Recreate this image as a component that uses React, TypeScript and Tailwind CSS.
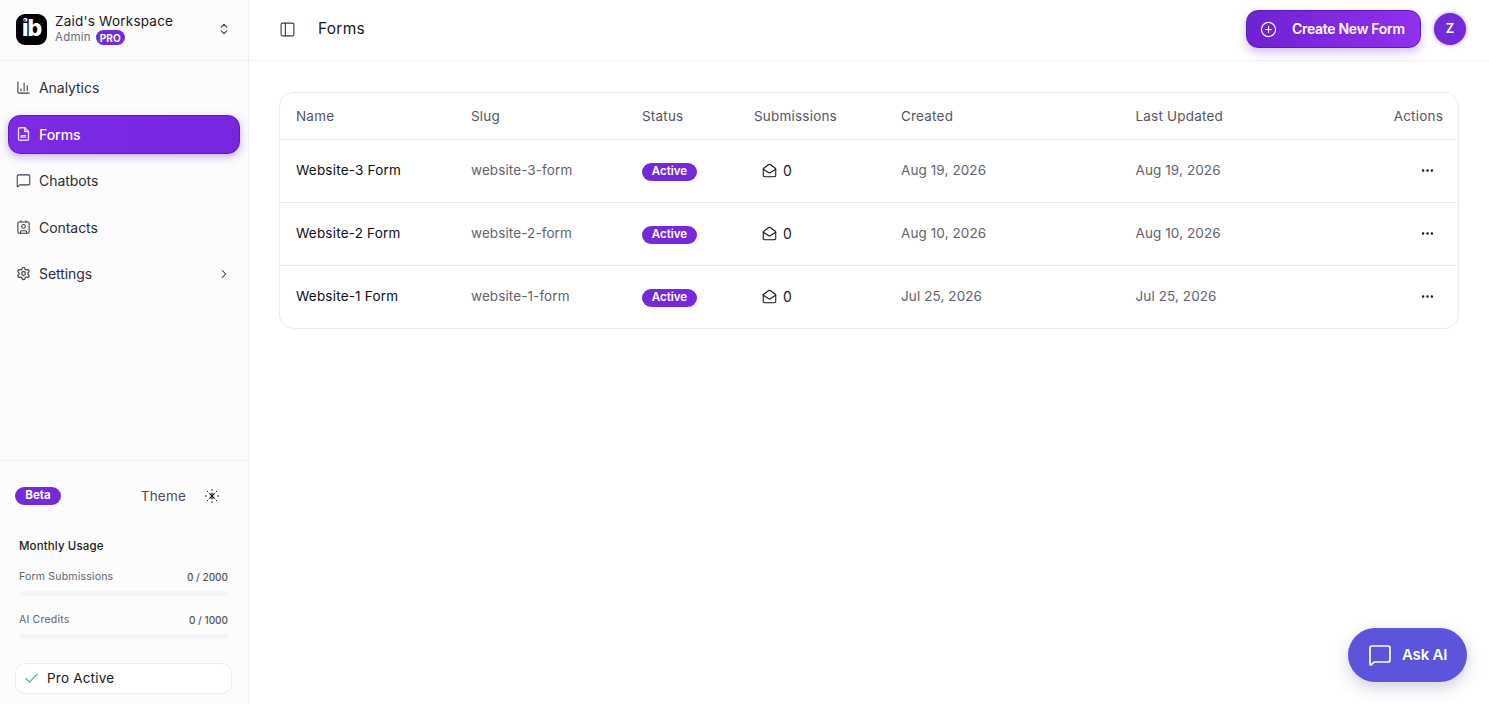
import {
  ChartColumn,
  Check,
  ChevronRight,
  ChevronsUpDown,
  CirclePlus,
  Contact,
  Ellipsis,
  MailOpen,
  MessageSquare,
  PanelLeft,
  Settings,
} from "lucide-react";
import type { ReactNode } from "react";

const rows = [
  { name: "Website-3 Form", slug: "website-3-form", created: "Aug 19, 2026", updated: "Aug 19, 2026" },
  { name: "Website-2 Form", slug: "website-2-form", created: "Aug 10, 2026", updated: "Aug 10, 2026" },
  { name: "Website-1 Form", slug: "website-1-form", created: "Jul 25, 2026", updated: "Jul 25, 2026" },
];

const gridCols = "grid grid-cols-[175px_171px_112px_147px_234.5px_1fr_auto] items-center pl-[16px] pr-[15px]";

function FormIcon() {
  return (
    <svg width="16" height="16" viewBox="0 0 24 24" fill="none" stroke="#ecdcff" strokeWidth="2.2" strokeLinecap="round" strokeLinejoin="round">
      <path d="M6 2h8l6 6v12a2 2 0 0 1-2 2H6a2 2 0 0 1-2-2V4a2 2 0 0 1 2-2z" />
      <path d="M14 2v6h6" />
      <path d="M8.5 17v-2.5h7" />
      <path d="M8.5 17h7" />
    </svg>
  );
}

function ThemeIcon() {
  return (
    <svg width="16" height="16" viewBox="0 0 24 24" fill="none" stroke="#1c1c22" strokeLinecap="round" className="ml-[18px]">
      <g strokeWidth="1.8">
        <path d="M8.5 8.5l7 7" />
        <path d="M15.5 8.5l-7 7" />
        <path d="M12 7.5v9" />
      </g>
      <g strokeWidth="1.5">
        <path d="M12 2v1.5" />
        <path d="M12 20.5V22" />
        <path d="M2 12h1.5" />
        <path d="M20.5 12H22" />
        <path d="M5 5l1 1" />
        <path d="M18 18l1 1" />
        <path d="M19 5l-1 1" />
        <path d="M6 18l-1 1" />
      </g>
    </svg>
  );
}

function NavItem({ icon, label, active, chevron }: { icon: ReactNode; label: string; active?: boolean; chevron?: boolean }) {
  return (
    <div
      className={
        active
          ? "flex h-[38.5px] items-center gap-2 rounded-xl border border-[#5b1bb8] bg-gradient-to-r from-[#7c2ae4] to-[#7626dc] pl-[7px] pr-2 font-medium text-white shadow-[0_3px_8px_rgba(109,40,217,0.35)]"
          : "flex h-[38.5px] items-center gap-2 pl-2 pr-2 text-[#2c2c38]"
      }
    >
      <span className="flex w-[15px] shrink-0 justify-center">{icon}</span>
      <span className="flex-1 text-[14px] tracking-[-0.05px]">{label}</span>
      {chevron && <ChevronRight size={14} strokeWidth={1.75} className="mr-[1px]" />}
    </div>
  );
}

function Usage({ label, value }: { label: string; value: string }) {
  return (
    <div>
      <div className="flex items-center justify-between leading-[16px]">
        <span className="text-[10.5px] tracking-[0.2px] text-[#62626e]">{label}</span>
        <span className="text-[10px] font-medium text-[#55555f]">{value}</span>
      </div>
      <div className="mt-[6px] h-[5px] rounded-full bg-[#f3f4f8]" />
    </div>
  );
}

export default function App() {
  return (
    <div className="relative flex h-[704px] w-full overflow-hidden bg-white font-['Inter',sans-serif] text-[#09090b]">
      <aside className="flex h-full w-[249px] shrink-0 flex-col border-r border-[#f0f0f2] bg-[#fcfcfc]">
        <div className="flex h-[61px] shrink-0 items-center border-b border-[#f2f2f3] pb-[2px] pl-4 pr-[17px]">
          <div className="relative flex h-[31px] w-[31px] shrink-0 items-center justify-center rounded-[9px] bg-black pb-[1px] text-[23px] font-extrabold leading-none tracking-[-1px] text-white">
            ib
            <span className="absolute left-[7px] top-[5px] h-[3px] w-[3px] rounded-full bg-[#5b46d8]" />
          </div>
          <div className="ml-[8px] flex-1">
            <div className="text-[13.5px] leading-[17px] tracking-[0.22px] text-[#17171c]">Zaid's Workspace</div>
            <div className="flex h-[16px] items-center gap-[5px]">
              <span className="text-[11.5px] tracking-[0.2px] text-[#6b6b80]">Admin</span>
              <span className="flex h-[15px] items-center rounded-full bg-[#7629d9] px-[4px] text-[10px] font-bold leading-none tracking-[0.2px] text-white">PRO</span>
            </div>
          </div>
          <ChevronsUpDown size={14} strokeWidth={1.75} className="text-[#24242c]" />
        </div>

        <nav className="flex flex-col gap-2 pl-2 pr-2 pt-[7.5px]">
          <NavItem icon={<ChartColumn size={15} strokeWidth={1.7} className="text-[#3c3c48]" />} label="Analytics" />
          <NavItem active icon={<FormIcon />} label="Forms" />
          <NavItem icon={<MessageSquare size={15} strokeWidth={1.7} className="text-[#3c3c48]" />} label="Chatbots" />
          <NavItem icon={<Contact size={16} strokeWidth={1.7} className="text-[#3c3c48]" />} label="Contacts" />
          <NavItem icon={<Settings size={15} strokeWidth={1.8} className="text-[#3c3c48]" />} label="Settings" chevron />
        </nav>

        <div className="mt-auto border-t border-[#f2f2f3] pb-[10px]">
          <div className="mt-[26px] flex h-[18px] items-center pl-[15px] pr-[28px]">
            <span className="flex h-[18px] w-[46px] items-center justify-center rounded-full bg-[#7629d9] text-[11.5px] font-bold text-white">Beta</span>
            <span className="ml-auto text-[13.5px] tracking-[0.2px] text-[#4d4d5a]">Theme</span>
            <ThemeIcon />
          </div>
          <div className="mt-[33px] pl-[19px] pr-[20px]">
            <div className="text-[11.5px] font-medium leading-[16px] tracking-[0.12px] text-[#1c1c22]">Monthly Usage</div>
            <div className="mt-[15px] flex flex-col gap-[16px]">
              <Usage label="Form Submissions" value="0 / 2000" />
              <Usage label="AI Credits" value="0 / 1000" />
            </div>
          </div>
          <div className="ml-[15px] mr-[16px] mt-[24px] flex h-[31px] items-center rounded-[10px] border border-[#ececef] bg-white pl-[6.5px]">
            <Check size={17} strokeWidth={1.6} className="text-[#45b56f]" />
            <span className="ml-[7.5px] text-[13.5px] tracking-[0.2px] text-[#17171c]">Pro Active</span>
          </div>
        </div>
      </aside>

      <main className="flex min-w-0 flex-1 flex-col">
        <header className="flex h-[61px] shrink-0 items-center border-b border-[#f4f4f5] pb-[2px] pl-[29.5px] pr-[23px]">
          <PanelLeft size={17} strokeWidth={1.6} className="text-[#3a3a44]" />
          <h1 className="ml-[22.5px] text-[15.5px] font-normal tracking-[0.25px] text-[#17171c]">Forms</h1>
          <button className="ml-auto flex h-[38px] w-[175px] items-center rounded-xl border border-[#5b1bb8] bg-gradient-to-r from-[#6f22d2] to-[#9130ee] pl-[13px] text-white shadow-[0_4px_10px_rgba(109,40,217,0.3)]">
            <CirclePlus size={17} strokeWidth={1.6} />
            <span className="mb-px ml-[15px] text-[14px] font-semibold tracking-[-0.3px]">Create New Form</span>
          </button>
          <div className="ml-[13px] flex h-[32px] w-[32px] items-center justify-center rounded-full bg-[#7629d9] text-[13px] font-semibold text-white shadow-[0_0_4px_rgba(124,42,224,0.5)]">Z</div>
        </header>

        <div className="pl-[30px] pr-[30px] pt-[31px]">
          <div className="overflow-hidden rounded-[14px] border border-[#ececee]">
            <div className={`${gridCols} h-[46px] pt-px text-[13.5px] tracking-[0.2px] text-[#55555f]`}>
              <span>Name</span>
              <span>Slug</span>
              <span>Status</span>
              <span>Submissions</span>
              <span>Created</span>
              <span>Last Updated</span>
              <span>Actions</span>
            </div>
            {rows.map((r) => (
              <div key={r.slug} className={`${gridCols} h-[63px] border-t border-[#ececee] pb-px text-[13.5px] tracking-[0.1px]`}>
                <span className="font-normal tracking-[0.2px] text-[#0d0d12]">{r.name}</span>
                <span className="text-[#62626e]">{r.slug}</span>
                <span className="flex pt-[2px]">
                  <span className="flex h-[18px] w-[55px] items-center justify-center rounded-full bg-[#7629d9] text-[11.5px] font-semibold tracking-normal text-white">Active</span>
                </span>
                <span className="flex items-center pl-[8px] text-[#17171c]">
                  <MailOpen size={15} strokeWidth={1.7} />
                  <span className="ml-[6px] text-[14px]">0</span>
                </span>
                <span className="text-[#62626e]">{r.created}</span>
                <span className="text-[#62626e]">{r.updated}</span>
                <span className="flex justify-end pr-[8px] text-[#17171c]">
                  <Ellipsis size={15} />
                </span>
              </div>
            ))}
          </div>
        </div>
      </main>

      <button className="absolute bottom-[22px] right-[22px] flex h-[54px] w-[119px] items-center rounded-full bg-[#5b55dc] pl-[20px] text-white shadow-[0_6px_16px_rgba(60,50,120,0.22)]">
        <MessageSquare size={24} strokeWidth={1.7} />
        <span className="ml-[10px] text-[15px] font-semibold tracking-[-0.2px]">Ask AI</span>
      </button>
    </div>
  );
}
